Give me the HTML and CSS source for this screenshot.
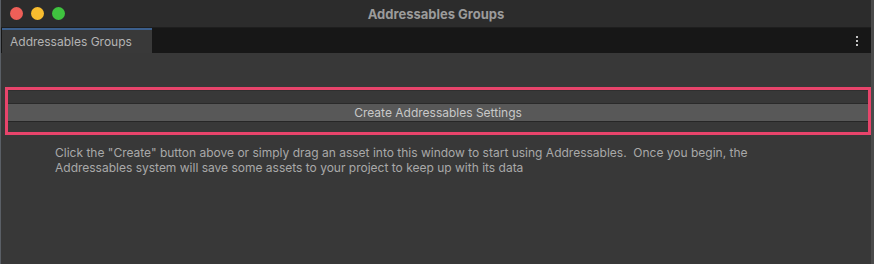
FILE: index.html
```html
<!DOCTYPE html>
<html>
<head>
<meta charset="utf-8">
<link rel="stylesheet" href="styles.css">
</head>
<body>
<div class="window">
  <div class="titlebar">
    <div class="lights">
      <span class="light red"></span>
      <span class="light yellow"></span>
      <span class="light green"></span>
    </div>
    <div class="title">Addressables Groups</div>
  </div>
  <div class="tabbar">
    <div class="tab">Addressables Groups</div>
    <div class="menu"><span></span><span></span><span></span></div>
  </div>
  <div class="content">
    <div class="highlight">
      <div class="btn">Create Addressables Settings</div>
    </div>
    <p class="help">Click the "Create" button above or simply drag an asset into this window to start using Addressables.&nbsp; Once you begin, the Addressables system will save some assets to your project to keep up with its data</p>
  </div>
</div>
</body>
</html>
```
FILE: styles.css
```css
html, body {
  margin: 0;
  padding: 0;
  background: #383838;
  width: 874px;
  height: 264px;
  overflow: hidden;
  font-family: Inter, "Noto Sans", sans-serif;
}
.window {
  width: 874px;
  height: 264px;
  display: flex;
  flex-direction: column;
  box-sizing: border-box;
  border-left: 1px solid #5a5f66;
  border-right: 3px solid #4a4a4a;
  background: #383838;
}
.titlebar {
  height: 27px;
  background: #2c2c2c;
  border-bottom: 1px solid #1e1e1e;
  display: flex;
  align-items: center;
  position: relative;
}
.lights {
  display: flex;
  gap: 8px;
  padding-left: 9px;
}
.light {
  width: 13px;
  height: 13px;
  border-radius: 50%;
  display: block;
}
.red { background: #ee5f58; }
.yellow { background: #f8bd2f; }
.green { background: #3fc33f; }
.title {
  position: absolute;
  left: 0;
  right: 0;
  text-align: center;
  font-size: 13px;
  font-weight: 700;
  color: #9b9b9b;
  top: 6px;
}
.tabbar {
  height: 25px;
  background: #171717;
  display: flex;
  align-items: stretch;
  justify-content: space-between;
  padding-left: 1px;
}
.tab {
  width: 150px;
  background: #393939;
  border-top: 2px solid #3c5f8c;
  box-sizing: border-box;
  color: #b4b4b4;
  font-size: 12px;
  padding: 4px 0 0 8px;
}
.menu {
  display: flex;
  flex-direction: column;
  gap: 2px;
  padding: 8px 13px 0 0;
}
.menu span {
  width: 2px;
  height: 2px;
  background: #c4c4c4;
  display: block;
}
.content {
  flex: 1;
  padding: 34px 0 0 4px;
}
.highlight {
  width: 866px;
  height: 48px;
  box-sizing: border-box;
  border: 3px solid #e8446b;
  padding: 13px 0 0 0;
  background: #383838;
  box-shadow: inset 0 1px 0 #2f2f2f;
}
.btn {
  height: 19px;
  box-sizing: border-box;
  background: #585858;
  border-top: 1px solid #2a2a2a;
  border-bottom: 1px solid #262626;
  width: 100%;
  text-align: center;
  color: #c8c8c8;
  font-size: 12px;
  line-height: 17px;
}
.help {
  margin: 10px 0 0 50px;
  width: 720px;
  color: #a9a9a9;
  font-size: 12px;
  line-height: 15px;
}
```
